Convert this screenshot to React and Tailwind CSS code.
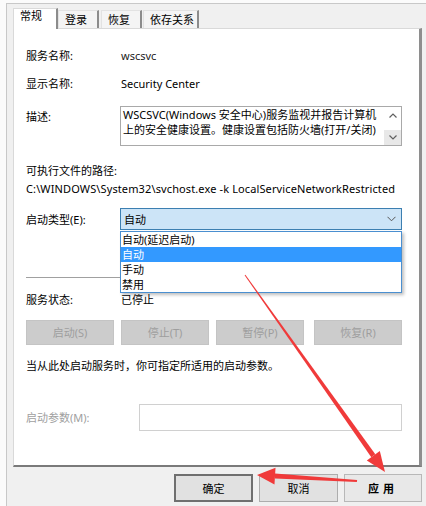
import React from "react";

function Tab({ label, selected, w }) {
  if (selected) {
    return (
      <div
        className={`relative z-10 h-[21px] ${w} bg-white border-l border-t border-[#dadada] border-r-2 border-r-[#8c8c8c] flex items-start pt-[1px] pl-[6px] text-[11px] text-black`}
      >
        {label}
      </div>
    );
  }
  return (
    <div
      className={`h-[18px] mt-[2px] ${w} bg-[#f4f4f4] border-l border-t border-[#e2e2e2] border-r-2 border-r-[#8c8c8c] flex items-center pl-[6px] text-[11px] text-black`}
    >
      {label}
    </div>
  );
}

function DisabledBtn({ label, w }) {
  return (
    <div
      className={`${w} h-[25px] bg-[#cccccc] border border-[#c4c4c4] flex items-center justify-center text-[11px] text-[#9e9e9e]`}
    >
      {label}
    </div>
  );
}

export default function App() {
  return (
    <div className="w-[426px] h-[506px] bg-[#fbfbfb] relative overflow-hidden font-['Noto_Sans','Noto_Sans_CJK_SC',sans-serif] leading-none text-black">
      <div className="absolute left-[6px] top-[3px] right-0 bottom-0 bg-[#f0f0f0] border-l border-t border-[#c8c8c8] pl-[6px] pt-[4px] flex flex-col">
        {/* tabs */}
        <div className="flex items-start h-[20px]">
          <Tab label="常规" selected w="w-[45px]" />
          <Tab label="登录" w="w-[41px]" />
          <div className="w-[2px]" />
          <Tab label="恢复" w="w-[41px]" />
          <div className="w-[1px]" />
          <Tab label="依存关系" w="w-[56px]" />
        </div>
        {/* panel */}
        <div className="w-[409px] h-[439px] bg-white border-l border-t border-[#d9d9d9] border-r-[3px] border-r-[#8e8e8e] border-b-2 border-b-[#7a7a7a] pl-[12px] flex flex-col text-[11px]">
          <div className="h-[20px] mt-[16px] flex items-center">
            <div className="w-[95px]">服务名称:</div>
            <div className="text-[#222]">wscsvc</div>
          </div>
          <div className="h-[20px] mt-[8px] flex items-center">
            <div className="w-[95px]">显示名称:</div>
            <div>Security Center</div>
          </div>
          <div className="mt-[13px] flex items-start">
            <div className="w-[94px] h-[20px] flex items-center">描述:</div>
            <div className="w-[282px] h-[40px] border border-[#a9a9a9] flex">
              <div className="flex-1 pl-[2px] leading-[15px] text-[11px]">
                <div>WSCSVC(Windows 安全中心)服务监视并报告计算机</div>
                <div>上的安全健康设置。健康设置包括防火墙(打开/关闭)</div>
              </div>
              <div className="w-[17px] flex flex-col justify-between">
                <div className="h-[16px] flex items-center justify-center">
                  <svg width="8" height="5" viewBox="0 0 8 5">
                    <path d="M0.5 4.5 L4 1 L7.5 4.5" fill="none" stroke="#606060" strokeWidth="1.2" />
                  </svg>
                </div>
                <div className="h-[15px] bg-[#e8e8e8] flex items-center justify-center">
                  <svg width="8" height="5" viewBox="0 0 8 5">
                    <path d="M0.5 0.5 L4 4 L7.5 0.5" fill="none" stroke="#606060" strokeWidth="1.2" />
                  </svg>
                </div>
              </div>
            </div>
          </div>
          <div className="h-[18px] mt-[15px] flex items-center">可执行文件的路径:</div>
          <div className="h-[18px] flex items-center whitespace-nowrap tracking-[0.12px]">
            C:\WINDOWS\System32\svchost.exe -k LocalServiceNetworkRestricted
          </div>
          <div className="mt-[11px] flex items-center h-[22px] relative z-20">
            <div className="w-[94px]">启动类型(E):</div>
            <div className="relative w-[282px] h-[22px]">
              <div className="w-full h-full bg-[#cce4f7] border border-[#3c7fb1] flex items-center justify-between pl-[3px] pr-[5px]">
                <span>自动</span>
                <svg width="9" height="6" viewBox="0 0 9 6">
                  <path d="M0.5 0.8 L4.5 4.8 L8.5 0.8" fill="none" stroke="#555" strokeWidth="1" />
                </svg>
              </div>
              <div className="absolute left-0 top-[23px] w-[282px] h-[62px] bg-white border border-[#4a8fd0] shadow-[2px_2px_3px_rgba(0,0,0,0.25)] flex flex-col text-[11px]">
                <div className="h-[15px] flex items-center pl-[1px]">自动(延迟启动)</div>
                <div className="h-[15px] flex items-center pl-[1px] bg-[#3399ff] text-white">自动</div>
                <div className="h-[15px] flex items-center pl-[1px]">手动</div>
                <div className="h-[15px] flex items-center pl-[1px]">禁用</div>
              </div>
            </div>
          </div>
          <div className="mt-[47px] h-[1px] w-[376px] bg-[#a0a0a0]" />
          <div className="h-[20px] mt-[11px] flex items-center">
            <div className="w-[95px]">服务状态:</div>
            <div>已停止</div>
          </div>
          <div className="mt-[11px] flex">
            <DisabledBtn label="启动(S)" w="w-[88px]" />
            <div className="w-[7px]" />
            <DisabledBtn label="停止(T)" w="w-[88px]" />
            <div className="w-[7px]" />
            <DisabledBtn label="暂停(P)" w="w-[88px]" />
            <div className="w-[10px]" />
            <DisabledBtn label="恢复(R)" w="w-[88px]" />
          </div>
          <div className="h-[20px] mt-[10px] flex items-center">
            当从此处启动服务时，你可指定所适用的启动参数。
          </div>
          <div className="mt-[29px] flex items-center">
            <div className="w-[113px] text-[#a0a0a0]">启动参数(M):</div>
            <div className="w-[263px] h-[27px] border border-[#d0d0d0] bg-white" />
          </div>
        </div>
        {/* bottom buttons */}
        <div className="flex mt-[7px] pl-[161px]">
          <div className="w-[79px] h-[28px] bg-[#e1e1e1] border-2 border-[#6f6f6f] flex items-center justify-center text-[11px]">
            确定
          </div>
          <div className="w-[6px]" />
          <div className="w-[79px] h-[28px] bg-[#e1e1e1] border border-[#adadad] flex items-center justify-center text-[11px]">
            取消
          </div>
          <div className="w-[6px]" />
          <div className="w-[78px] h-[28px] bg-[#e8e8e8] border border-[#b8b8b8] flex items-center justify-center text-[11px] font-semibold tracking-[4px]">
            应用
          </div>
        </div>
      </div>
      {/* red annotation arrows */}
      <svg className="absolute left-0 top-0 pointer-events-none z-30" width="426" height="506" viewBox="0 0 426 506">
        <polygon points="245.4,274.7 375.3,454.3 371.3,457.3 244.6,275.3" fill="#f03a3a" />
        <polygon points="385,472 379.8,451.1 366.8,460.5" fill="#f03a3a" />
        <polygon points="275,473.6 357.1,480 356.9,482 275,478.6" fill="#f03a3a" />
        <polygon points="257,475 275.5,467.8 274.5,484.4" fill="#f03a3a" />
      </svg>
    </div>
  );
}
